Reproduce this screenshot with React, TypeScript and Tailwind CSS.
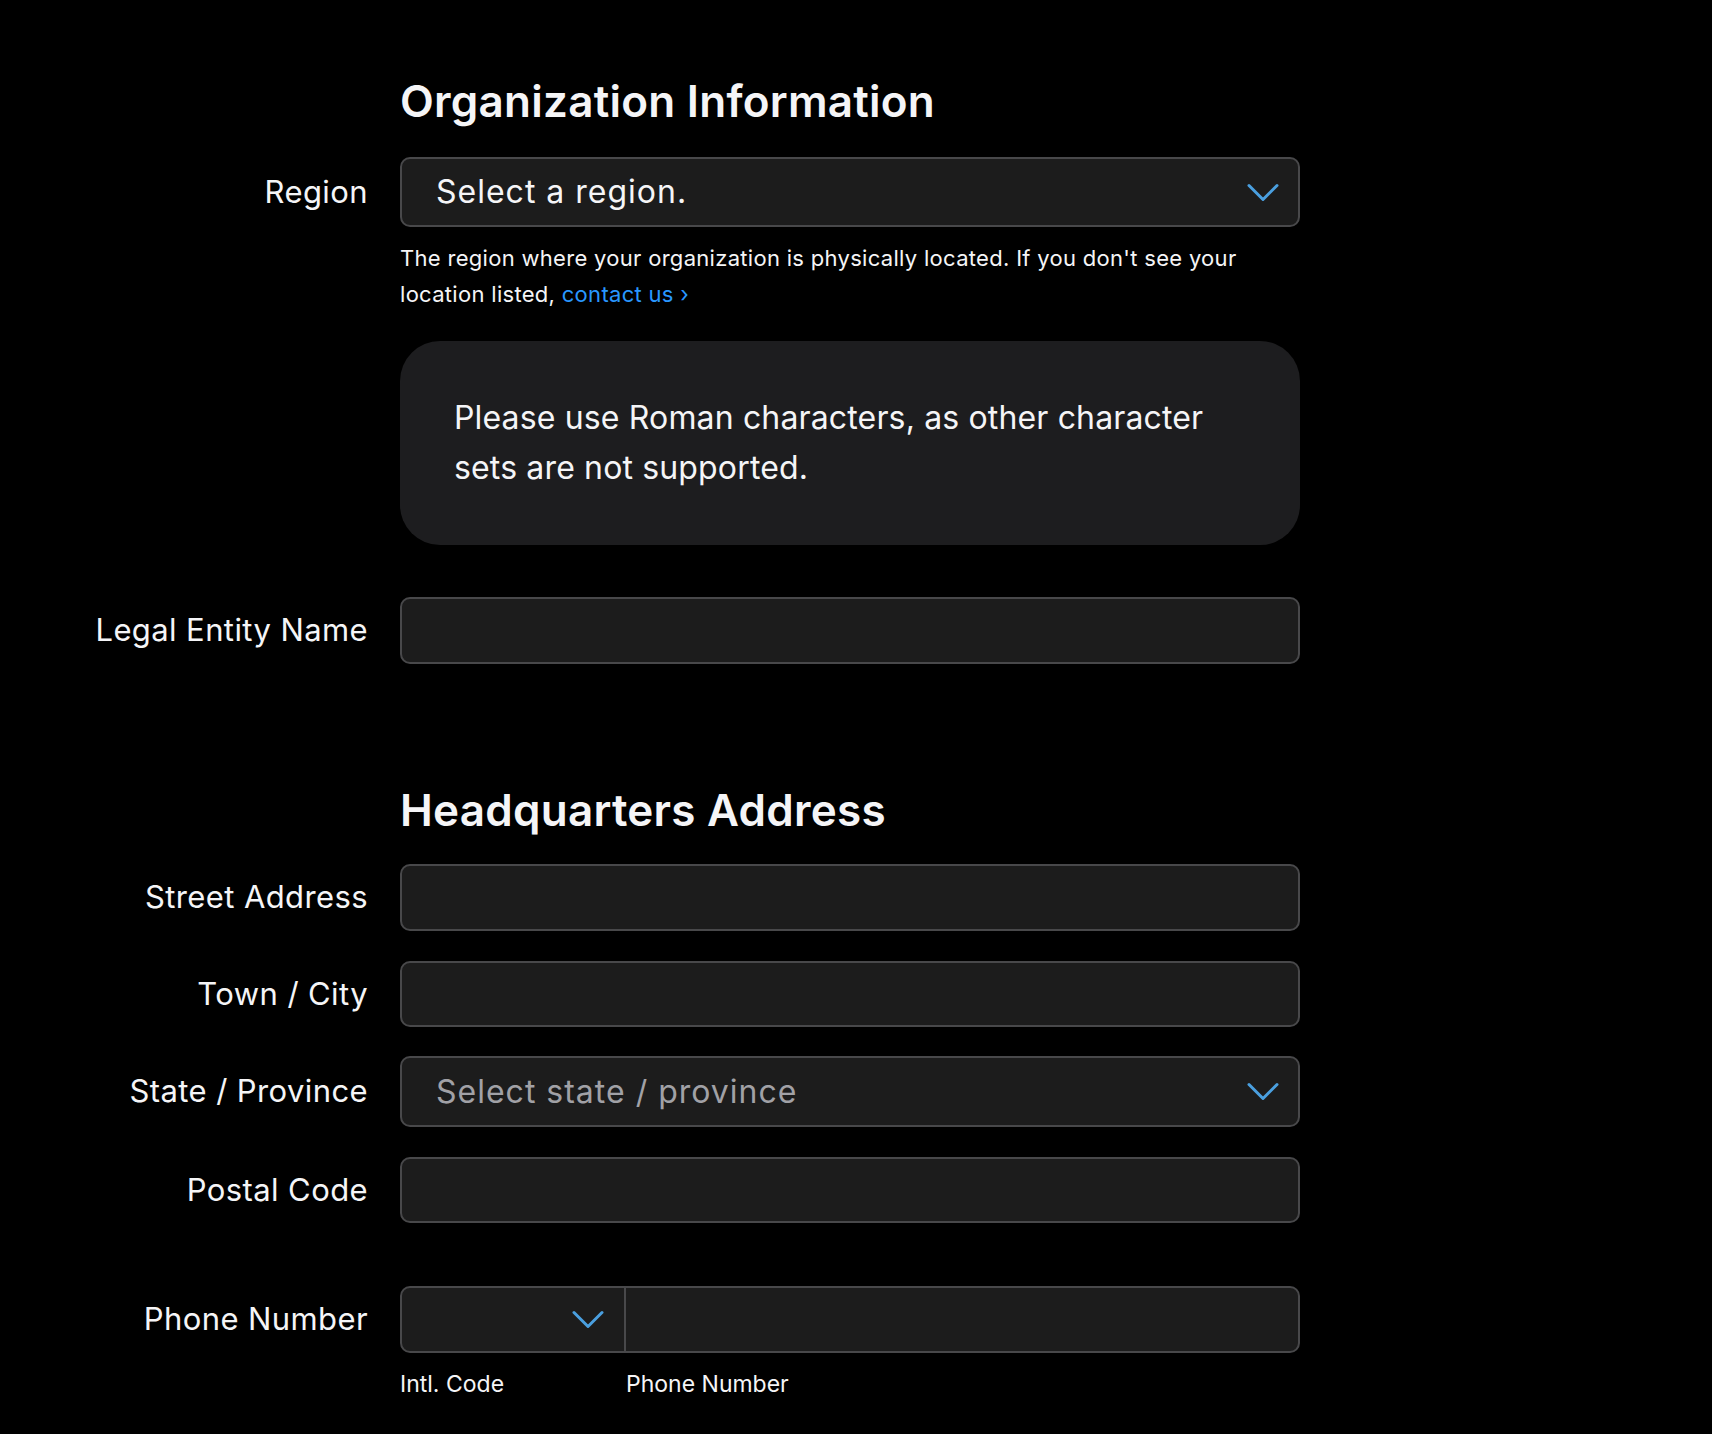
const font = { fontFamily: 'Inter, "Noto Sans", sans-serif' };

function Chevron() {
  return (
    <svg width="32" height="19" viewBox="0 0 32 19" fill="none" className="shrink-0">
      <path d="M2 2.5 L16 16.5 L30 2.5" stroke="#4a9fdf" strokeWidth="3" strokeLinecap="round" strokeLinejoin="round" />
    </svg>
  );
}

// shared label + field row
function Row({ label, children, className = '' }: { label: string; children: React.ReactNode; className?: string }) {
  return (
    <div className={`flex items-center gap-8 ${className}`}>
      <div className="w-[368px] shrink-0 text-right text-[31px] tracking-[0.4px] text-[#f5f5f7]">{label}</div>
      <div className="w-[900px]">{children}</div>
    </div>
  );
}

function TextInput({ h = 'h-[67px]' }: { h?: string }) {
  return <div className={`${h} rounded-[10px] border-2 border-[#48484a] bg-[#1c1c1c]`} />;
}

function Select({ placeholder, muted = false, h = 'h-[70px]' }: { placeholder: string; muted?: boolean; h?: string }) {
  return (
    <div className={`flex items-center justify-between rounded-[10px] border-2 border-[#48484a] bg-[#1c1c1c] pl-[34px] pr-[19px] ${h}`}>
      <span className={`text-[32px] tracking-[1px] ${muted ? 'text-[#a1a1a6]' : 'text-[#f5f5f7]'}`}>{placeholder}</span>
      <Chevron />
    </div>
  );
}

function Spacer({ children, className = '' }: { children: React.ReactNode; className?: string }) {
  return (
    <div className={`flex gap-8 ${className}`}>
      <div className="w-[368px] shrink-0" />
      <div className="w-[900px]">{children}</div>
    </div>
  );
}

export default function App() {
  return (
    <div className="min-h-[1434px] bg-black text-[#f5f5f7]" style={font}>
      <div className="pt-[75px]">
        {/* Organization Information */}
        <Spacer>
          <h1 className="text-[44px] font-semibold leading-[52px] tracking-[0.25px]">Organization Information</h1>
        </Spacer>

        <Row label="Region" className="mt-[30px]">
          <Select placeholder="Select a region." />
        </Row>

        <Spacer>
          <p className="mt-[13px] text-[22px] leading-[36px] tracking-[0.3px] text-[#f5f5f7]">
            The region where your organization is physically located. If you don't see your location listed,{' '}
            <span className="text-[#2997ff]">contact us ›</span>
          </p>
          <div className="mt-[29px] flex h-[204px] items-center rounded-[40px] bg-[#1d1d1f] px-[54px]">
            <p className="text-[32px] leading-[50px] tracking-[0.15px] text-[#f5f5f7]">
              Please use Roman characters, as other character sets are not supported.
            </p>
          </div>
        </Spacer>

        <Row label="Legal Entity Name" className="mt-[52px]">
          <TextInput />
        </Row>

        {/* Headquarters Address */}
        <Spacer className="mt-[120px]">
          <h2 className="text-[44px] font-semibold leading-[52px] tracking-[0.25px]">Headquarters Address</h2>
        </Spacer>

        <Row label="Street Address" className="mt-[28px]">
          <TextInput />
        </Row>
        <Row label="Town / City" className="mt-[30px]">
          <TextInput h="h-[66px]" />
        </Row>
        <Row label="State / Province" className="mt-[29px]">
          <Select placeholder="Select state / province" muted h="h-[71px]" />
        </Row>
        <Row label="Postal Code" className="mt-[30px]">
          <TextInput h="h-[66px]" />
        </Row>

        <Row label="Phone Number" className="mt-[63px]">
          <div className="flex h-[67px] rounded-[10px] border-2 border-[#48484a] bg-[#1c1c1c]">
            <div className="flex w-[224px] items-center justify-end border-r-2 border-[#48484a] pr-[20px]">
              <Chevron />
            </div>
            <div className="flex-1" />
          </div>
        </Row>
        <Spacer className="mt-[16px]">
          <div className="flex text-[23px] leading-[30px] text-[#f5f5f7]">
            <span className="w-[226px]">Intl. Code</span>
            <span>Phone Number</span>
          </div>
        </Spacer>
      </div>
    </div>
  );
}
